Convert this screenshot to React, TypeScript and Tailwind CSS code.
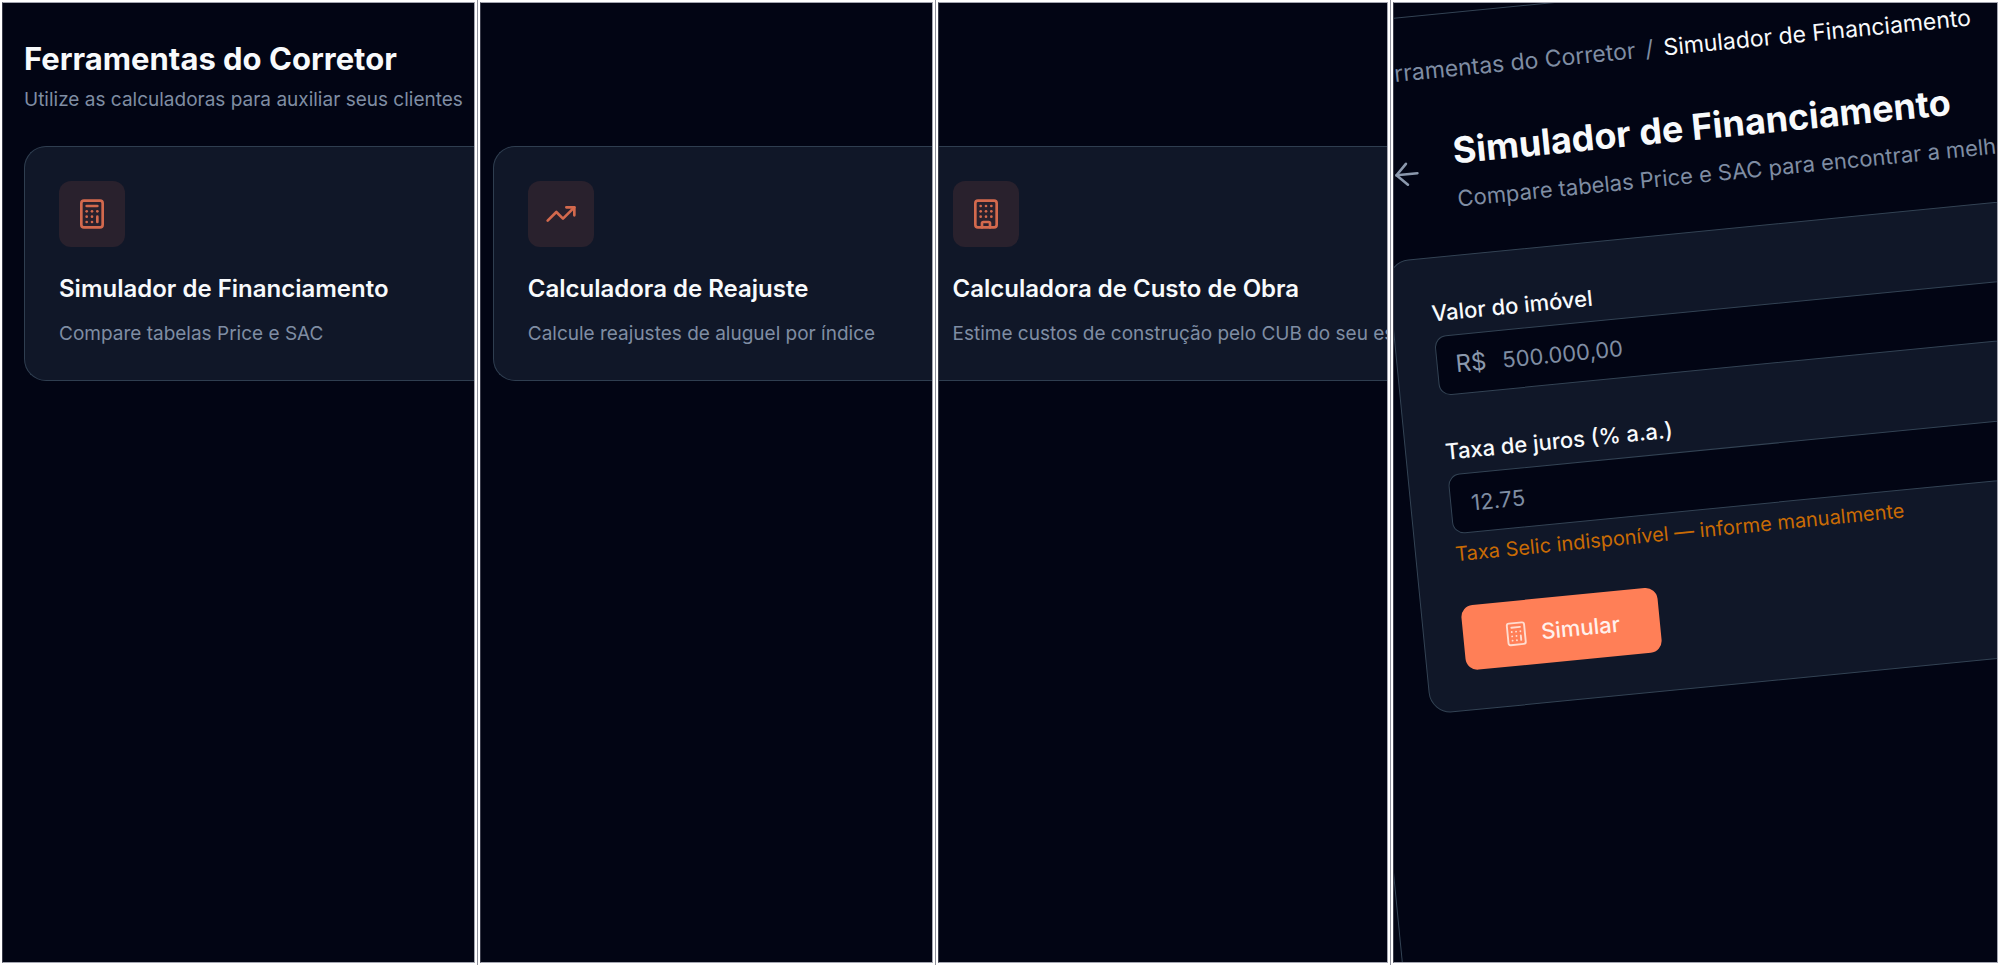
import { ArrowLeft, Building, Calculator, TrendingUp } from "lucide-react";
import type { ReactNode } from "react";

function Panel({ children }: { children?: ReactNode }) {
  return (
    <section className="flex min-w-0 overflow-hidden border-2 border-white">
      <div className="min-w-0 flex-1 overflow-hidden border border-[#a3a5b0] border-l-[#3a3c4a] bg-[#020514]">{children}</div>
    </section>
  );
}

function ToolCard({ icon, title, text, edge }: { icon: ReactNode; title: string; text: string; edge: string }) {
  return (
    <a href="#" className={`block border-y border-[#2f3e50] bg-[#101728] pt-[34px] pb-8 whitespace-nowrap ${edge}`}>
      <span className="flex size-[66px] items-center justify-center rounded-xl bg-[#29212d] text-[#d3694d]">{icon}</span>
      <h2 className="mt-[26px] text-2xl font-semibold text-slate-50">{title}</h2>
      <p className="mt-[15px] text-[19px] leading-7 text-[#7f8da3]">{text}</p>
    </a>
  );
}

function SimulatorForm() {
  return (
    <form
      onSubmit={(event) => event.preventDefault()}
      className="mt-10 rounded-[22px] border border-[#334354] bg-[#101728] p-[39px] text-[22px] leading-8"
    >
      <label htmlFor="valor" className="block font-medium text-slate-50">
        Valor do imóvel
      </label>
      <div className="mt-[7px] flex h-[60px] items-center gap-4 rounded-xl border border-[#334354] bg-[#020514] px-[18px]">
        <span className="text-2xl text-[#8b98ac]">R$</span>
        <input
          id="valor"
          type="text"
          inputMode="decimal"
          placeholder="500.000,00"
          className="min-w-0 flex-1 bg-transparent text-slate-50 outline-none placeholder:text-[#7f8da3]"
        />
      </div>
      <label htmlFor="taxa" className="mt-10 block font-medium text-slate-50">
        Taxa de juros (% a.a.)
      </label>
      <input
        id="taxa"
        type="text"
        inputMode="decimal"
        placeholder="12.75"
        className="mt-[7px] block h-[60px] w-full rounded-xl border border-[#334354] bg-[#020514] px-5 text-slate-50 outline-none placeholder:text-[#7f8da3]"
      />
      <p className="mt-2 text-xl leading-6 text-[#c96b04]">Taxa Selic indisponível — informe manualmente</p>
      <button type="submit" className="mt-10 flex h-[65px] items-center gap-3 rounded-xl bg-[#ff7f57] px-10 font-medium text-[#fff1ec]">
        <Calculator className="size-[26px] text-[#ffdccf]" strokeWidth={1.75} />
        Simular
      </button>
    </form>
  );
}

export default function App() {
  return (
    <main className="grid min-h-screen grid-cols-[477fr_457fr_455fr_609fr] gap-px bg-[#8f919c] font-['Inter',sans-serif]">
      <Panel>
        <div className="pl-[21px]">
          <header className="flex h-[143px] flex-col pt-9 whitespace-nowrap">
            <h1 className="text-[31px] leading-10 font-bold text-slate-50">Ferramentas do Corretor</h1>
            <p className="mt-[7px] text-[19px] leading-7 text-[#7f8da3]">Utilize as calculadoras para auxiliar seus clientes</p>
          </header>
          <ToolCard
            edge="rounded-l-[22px] border-l pl-[34px]"
            icon={<Calculator className="size-8" />}
            title="Simulador de Financiamento"
            text="Compare tabelas Price e SAC"
          />
        </div>
      </Panel>
      <Panel>
        <div className="pt-[143px] pl-3">
          <ToolCard
            edge="rounded-l-[22px] border-l pl-[34px]"
            icon={<TrendingUp className="size-8" />}
            title="Calculadora de Reajuste"
            text="Calcule reajustes de aluguel por índice"
          />
        </div>
      </Panel>
      <Panel>
        <div className="pt-[143px]">
          <ToolCard
            edge="pl-3.5"
            icon={<Building className="size-8" />}
            title="Calculadora de Custo de Obra"
            text="Estime custos de construção pelo CUB do seu estado"
          />
        </div>
      </Panel>
      <Panel>
        <div className="-ml-[84px] h-full w-[150%] origin-top-left translate-y-[23px] rotate-[-5.6deg] border-t border-l border-[#334354] px-[52px] pt-[39px] whitespace-nowrap">
          <nav className="flex gap-2.5 text-[23px] leading-8 text-[#7f8da3]">
            <a href="#">Ferramentas do Corretor</a>
            <span>/</span>
            <span className="text-slate-50">Simulador de Financiamento</span>
          </nav>
          <header className="mt-11 flex items-start gap-5">
            <button type="button" aria-label="Voltar" className="mt-3 flex size-[57px] shrink-0 items-center justify-center text-[#8b98ac]">
              <ArrowLeft className="size-9" strokeWidth={1.75} />
            </button>
            <div>
              <h1 className="text-4xl leading-11 font-bold text-slate-50">Simulador de Financiamento</h1>
              <p className="mt-2.5 text-[22px] leading-8 text-[#7f8da3]">Compare tabelas Price e SAC para encontrar a melhor opção</p>
            </div>
          </header>
          <SimulatorForm />
        </div>
      </Panel>
    </main>
  );
}
